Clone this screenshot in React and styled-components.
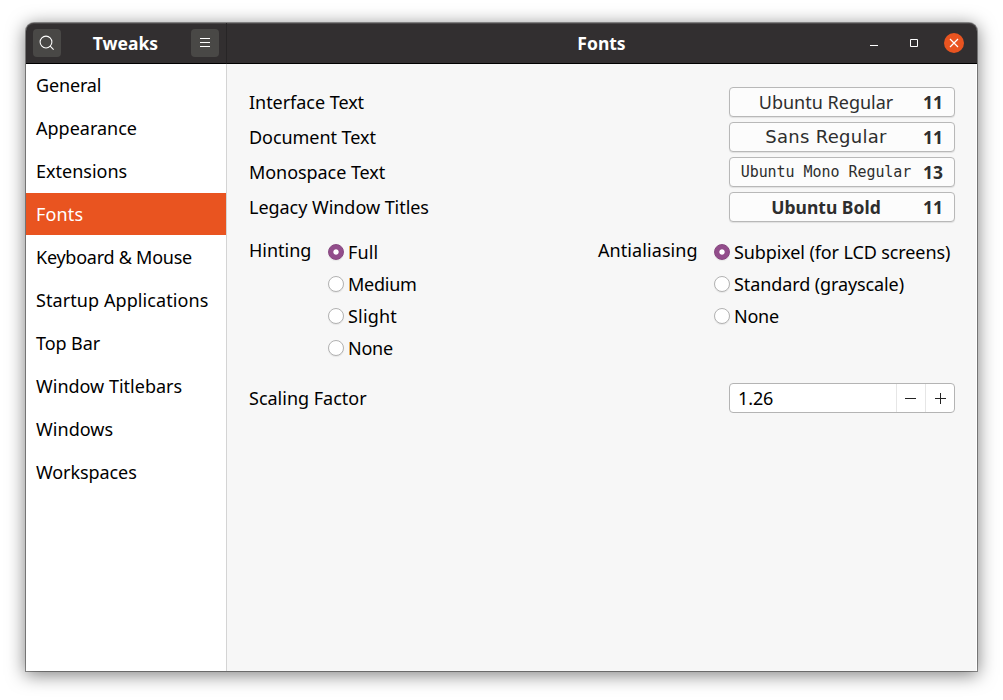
import React from "react";
import styled, { createGlobalStyle } from "styled-components";

const Global = createGlobalStyle`
  * { box-sizing: border-box; }
  body { margin: 0; background: #fff; overflow: hidden; }
`;

const Desktop = styled.div`
  width: 1003px;
  height: 700px;
  padding: 23px 26px 29px;
  font-family: "Noto Sans", "Open Sans", sans-serif;
  font-size: 18px;
  line-height: 24px;
  color: #000;
`;

const Window = styled.div`
  width: 951px;
  height: 648px;
  border-radius: 8px 8px 0 0;
  display: grid;
  grid-template-columns: 200px 751px;
  grid-template-rows: 41px 607px;
  background: #f7f7f7;
  box-shadow: 0 0 0 1px rgba(0, 0, 0, 0.38), 0 3px 18px 1px rgba(0, 0, 0, 0.5);
`;

const HeaderSide = styled.header`
  display: flex;
  align-items: center;
  justify-content: space-between;
  padding: 0 7px 1px;
  background: #322f30;
  border-bottom: 1px solid #000;
  box-shadow: inset 0 1px #4b4849;
  border-radius: 8px 0 0 0;
`;

const HeaderMain = styled.header`
  display: grid;
  grid-template-columns: 130px 1fr 130px;
  align-items: center;
  padding-bottom: 1px;
  background: #322f30;
  border-bottom: 1px solid #000;
  border-left: 1px solid #272526;
  box-shadow: inset 0 1px #4b4849;
  border-radius: 0 8px 0 0;
`;

const Text = styled.span`
  display: inline-block;
  white-space: nowrap;
  letter-spacing: ${(p) => p.$ls || 0}px;
`;

const Title = styled(Text)`
  color: #fff;
  font-weight: 700;
  font-size: 17.5px;
  text-align: center;
  padding-right: 1px;
`;

const ToolButton = styled.button`
  width: 28px;
  height: 28px;
  padding: 0;
  border: 0;
  border-radius: 4px;
  background: #494846;
  display: grid;
  place-items: center;
`;

const Controls = styled.div`
  display: flex;
  align-items: center;
  justify-content: flex-end;
  gap: 20px;
  padding-right: 13px;
`;

const Close = styled.span`
  width: 20px;
  height: 20px;
  border-radius: 50%;
  background: #e95420;
  display: grid;
  place-items: center;
`;

const Sidebar = styled.nav`
  display: flex;
  flex-direction: column;
  gap: 1px;
  background: #fff;
`;

const SideItem = styled.div`
  height: 42px;
  padding: 9px 10px;
  color: ${(p) => (p.$active ? "#fff" : "#000")};
  background: ${(p) => (p.$active ? "#e95420" : "transparent")};
`;

const Panel = styled.main`
  border-left: 1px solid #d4d4d4;
  border-right: 1px solid #fff;
  padding: 23px 21px 0 22px;
`;

const FontRows = styled.section`
  display: flex;
  flex-direction: column;
  gap: 5px;
`;

const Row = styled.div`
  display: flex;
  align-items: center;
  justify-content: space-between;
  height: 30px;
`;

const RowLabel = styled(Text)``;

const FontButton = styled.button`
  width: 226px;
  height: 30px;
  padding: 0 10px;
  display: grid;
  grid-template-columns: 172px 31px;
  align-items: center;
  background: #fcfcfc;
  border: 1px solid #b8b8b8;
  border-radius: 4px;
  box-shadow: 0 1px 1px rgba(0, 0, 0, 0.09);
  color: #2e2e2e;
  font: inherit;
`;

const FontName = styled(Text)`
  text-align: center;
  font-family: ${(p) => p.$family || "inherit"};
  font-size: ${(p) => p.$size || 18}px;
  font-weight: ${(p) => p.$weight || 400};
  padding-top: ${(p) => p.$drop || 0}px;
`;

const FontSize = styled(Text)`
  font-weight: 700;
  font-size: 17.5px;
  text-align: right;
`;

const Options = styled.section`
  display: grid;
  grid-template-columns: 79px 270px 116px 1fr;
  margin-top: 15px;
  height: 128px;
`;

const RadioList = styled.div`
  display: flex;
  flex-direction: column;
`;

const RadioRow = styled.label`
  display: flex;
  align-items: center;
  gap: 4px;
  height: 32px;
  margin-top: ${(p) => (p.$first ? -1 : 0)}px;
`;

const RadioDot = styled.span`
  width: 16px;
  height: 16px;
  flex: none;
  border-radius: 50%;
  background: ${(p) => (p.$on ? "radial-gradient(circle, #fff 0 2.2px, #924d8b 3.1px)" : "#fff")};
  border: 1px solid ${(p) => (p.$on ? "#86467f" : "#b2b2b2")};
  box-shadow: 0 1px 1px rgba(0, 0, 0, 0.07);
`;

const GroupLabel = styled(Text)`
  padding-top: 1px;
`;

const ScaleRow = styled(Row)`
  margin-top: 18px;
`;

const Spin = styled.div`
  width: 226px;
  height: 30px;
  display: grid;
  grid-template-columns: 1fr 29px 29px;
  align-items: stretch;
  background: #fff;
  border: 1px solid #b4b4b4;
  border-radius: 4px;
`;

const SpinValue = styled(Text)`
  padding: 2px 0 0 8px;
`;

const SpinButton = styled.span`
  border-left: 1px solid #e6e6e6;
  display: grid;
  place-items: center;
`;

const items = [
  ["General", -0.15],
  ["Appearance", 0],
  ["Extensions", 0],
  ["Fonts", 0.15],
  ["Keyboard & Mouse", -0.25],
  ["Startup Applications", 0.08],
  ["Top Bar", -0.08],
  ["Window Titlebars", 0],
  ["Windows", 0.05],
  ["Workspaces", -0.08],
];

const fonts = [
  { label: "Interface Text", name: "Ubuntu Regular", size: 11, labelLs: -0.04 },
  { label: "Document Text", name: "Sans Regular", size: 11, labelLs: -0.06, family: '"DejaVu Sans", sans-serif', ls: 0.3 },
  { label: "Monospace Text", name: "Ubuntu Mono Regular", size: 13, labelLs: -0.06, family: '"DejaVu Sans Mono", monospace', px: 15, ls: -0.05 },
  { label: "Legacy Window Titles", name: "Ubuntu Bold", size: 11, labelLs: -0.04, weight: 700, px: 17.5 },
];

const hinting = [["Full", 0.1], ["Medium", -0.25], ["Slight", 0.2], ["None", -0.25]];
const antialiasing = [["Subpixel (for LCD screens)", -0.11], ["Standard (grayscale)", -0.1], ["None", -0.25]];

function Radios({ options }) {
  return (
    <RadioList>
      {options.map(([text, ls], i) => (
        <RadioRow key={text} $first={i === 0}>
          <RadioDot $on={i === 0} />
          <Text $ls={ls}>{text}</Text>
        </RadioRow>
      ))}
    </RadioList>
  );
}

export default function App() {
  return (
    <Desktop>
      <Global />
      <Window>
        <HeaderSide>
          <ToolButton aria-label="Search">
            <svg width="16" height="16" viewBox="0 0 16 16" fill="none" stroke="#fff" strokeWidth="1.05">
              <circle cx="7" cy="7" r="5.9" />
              <path d="M11.2 11.2 14.600 14.600" />
            </svg>
          </ToolButton>
          <Title>Tweaks</Title>
          <ToolButton aria-label="Menu">
            <svg width="16" height="16" viewBox="0 0 16 16" fill="none" stroke="#fff">
              <path d="M3 3.5h10M3 7.5h10M3 11.5h10" />
            </svg>
          </ToolButton>
        </HeaderSide>
        <HeaderMain>
          <span />
          <Title>Fonts</Title>
          <Controls>
            <svg width="20" height="20" viewBox="0 0 20 20" fill="none" stroke="#fff">
              <path d="M6 12.5h8" />
            </svg>
            <svg width="20" height="20" viewBox="0 0 20 20" fill="none" stroke="#fff">
              <path d="M6.500 6.500h7v7h-7z" />
            </svg>
            <Close>
              <svg width="10" height="10" viewBox="0 0 10 10" fill="none" stroke="#fff" strokeWidth="1.2">
                <path d="m1 1 8 8M9 1 1 9" />
              </svg>
            </Close>
          </Controls>
        </HeaderMain>
        <Sidebar>
          {items.map(([text, ls]) => (
            <SideItem key={text} $active={text === "Fonts"}>
              <Text $ls={ls}>{text}</Text>
            </SideItem>
          ))}
        </Sidebar>
        <Panel>
          <FontRows>
            {fonts.map((f) => (
              <Row key={f.label}>
                <RowLabel $ls={f.labelLs}>{f.label}</RowLabel>
                <FontButton>
                  <FontName $family={f.family} $size={f.px} $weight={f.weight} $drop={f.drop} $ls={f.ls}>
                    {f.name}
                  </FontName>
                  <FontSize>{f.size}</FontSize>
                </FontButton>
              </Row>
            ))}
          </FontRows>
          <Options>
            <GroupLabel>Hinting</GroupLabel>
            <Radios options={hinting} />
            <GroupLabel $ls={0.08}>Antialiasing</GroupLabel>
            <Radios options={antialiasing} />
          </Options>
          <ScaleRow>
            <RowLabel>Scaling Factor</RowLabel>
            <Spin>
              <SpinValue $ls={-0.1}>1.26</SpinValue>
              <SpinButton>
                <svg width="12" height="12" viewBox="0 0 12 12" stroke="#222">
                  <path d="M0 6.500h11" />
                </svg>
              </SpinButton>
              <SpinButton>
                <svg width="12" height="12" viewBox="0 0 12 12" stroke="#222">
                  <path d="M1 6.500h11M6.500 1v11" />
                </svg>
              </SpinButton>
            </Spin>
          </ScaleRow>
        </Panel>
      </Window>
    </Desktop>
  );
}
